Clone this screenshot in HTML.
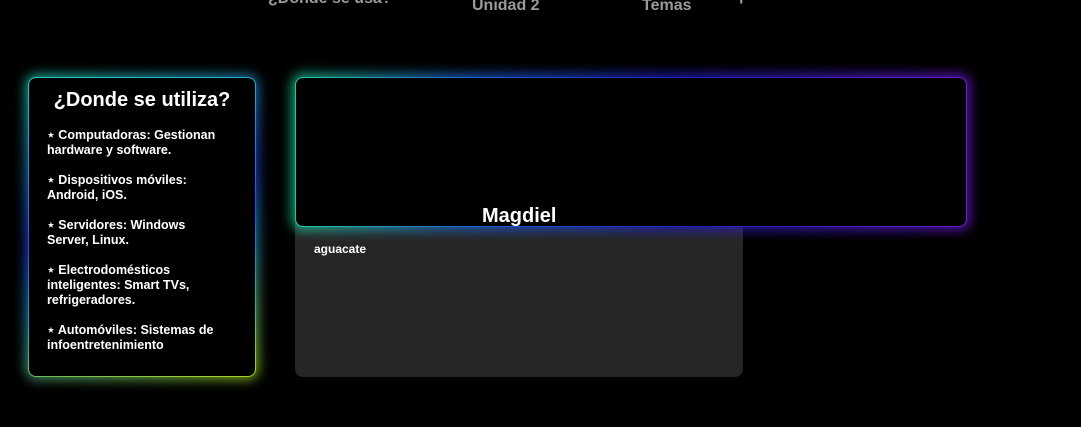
<!DOCTYPE html>
<html><head><meta charset="utf-8"><style>
body{margin:0;width:1081px;height:427px;background:#000;overflow:hidden;position:relative;font-family:"Liberation Sans",Arial,sans-serif;font-weight:bold;color:#fff}
.nav{position:absolute;color:#9a9a9a;font-size:16px;white-space:nowrap}
.glow{position:absolute;border-radius:10px;filter:blur(6px)}
.card{position:absolute;background:#000;border-radius:8px;padding:1px;box-sizing:border-box}
.inner{background:#000;border-radius:7px;width:100%;height:100%}
</style></head><body>
<div class="nav" style="left:268px;top:-10px">¿Donde se usa?</div>
<div class="nav" style="left:472px;top:-3px">Unidad 2</div>
<div class="nav" style="left:642px;top:-3px">Temas</div>
<div class="nav" style="left:739px;top:-13px">p</div>

<div style="position:absolute;left:295px;top:220px;width:448px;height:157px;background:#262626;border-radius:0 0 8px 8px"></div>
<div style="position:absolute;left:314px;top:242px;font-size:12px">aguacate</div>

<div class="glow" style="left:26px;top:75px;width:232px;height:304px;background:linear-gradient(160deg,#1fd6b0 0%,#2040e0 45%,#1a8fd0 60%,#9ad81a 100%);opacity:.85"></div>
<div class="card" style="left:28px;top:77px;width:228px;height:300px;background:linear-gradient(170deg,#22c9c0,#2a4ce0 50%,#1fa9a0 75%,#b2d020)">
<div class="inner"></div></div>
<div style="position:absolute;left:28px;top:89px;width:228px;text-align:center;font-size:20px">¿Donde se utiliza?</div>
<div style="position:absolute;left:47px;top:128px;width:182px;font-size:12.5px;line-height:15px">
<div>⋆ Computadoras: Gestionan hardware y software.</div><br>
<div>⋆ Dispositivos móviles: Android, iOS.</div><br>
<div>⋆ Servidores: Windows Server, Linux.</div><br>
<div>⋆ Electrodomésticos inteligentes: Smart TVs, refrigeradores.</div><br>
<div>⋆ Automóviles: Sistemas de infoentretenimiento</div>
</div>

<div class="glow" style="left:292px;top:74px;width:678px;height:156px;background:linear-gradient(to right,#1fd6a0 0%,#1a6ad8 25%,#2020d0 55%,#6a18d8 100%);opacity:.8"></div>
<div class="card" style="left:295px;top:77px;width:672px;height:150px;background:linear-gradient(to right,#22c9a0,#1a55d8 30%,#2020c0 60%,#6a20d0)">
<div class="inner"></div></div>
<div style="position:absolute;left:482px;top:205px;font-size:20px">Magdiel</div>
</body></html>
